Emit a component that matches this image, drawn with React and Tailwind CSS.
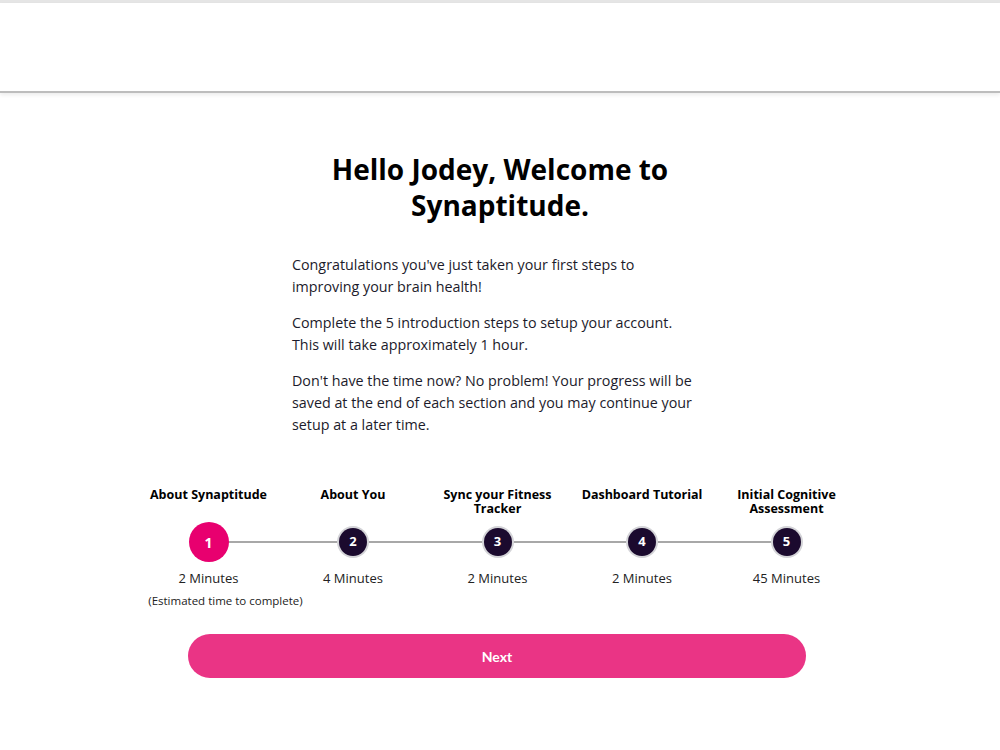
import React from "react";

const steps = [
  { n: 1, title: ["About Synaptitude"], time: "2 Minutes", active: true },
  { n: 2, title: ["About You"], time: "4 Minutes" },
  { n: 3, title: ["Sync your Fitness", "Tracker"], time: "2 Minutes" },
  { n: 4, title: ["Dashboard Tutorial"], time: "2 Minutes" },
  { n: 5, title: ["Initial Cognitive", "Assessment"], time: "45 Minutes" },
];

function Step({ step }) {
  return (
    <div className="flex flex-col items-center w-[144.5px]">
      <div className="h-[30px] text-[12.5px] font-bold leading-[14px] text-black text-center pt-[2px]">
        {step.title.map((t) => (
          <div key={t}>{t}</div>
        ))}
      </div>
      <div className="h-[40px] mt-[6px] flex items-center justify-center relative z-10">
        {step.active ? (
          <div className="w-[40px] h-[40px] rounded-full bg-[#e8006f] text-white font-bold text-[14px] flex items-center justify-center">
            {step.n}
          </div>
        ) : (
          <div className="w-[28px] h-[28px] rounded-full bg-[#1b0a2e] text-white font-bold text-[13px] flex items-center justify-center shadow-[0_0_0_2px_#d4d4d8]">
            {step.n}
          </div>
        )}
      </div>
      <div className="mt-[8px] text-[13px] leading-[16px] text-[#222]">{step.time}</div>
      {step.active && (
        <div className="mt-[8px] self-start ml-[12px] text-[11.5px] leading-[14px] text-[#222] whitespace-nowrap">
          (Estimated time to complete)
        </div>
      )}
    </div>
  );
}

export default function App() {
  return (
    <div className="min-h-[750px] bg-white font-['Open_Sans',sans-serif]">
      <div className="h-[3px] bg-[#e5e5e5]" />
      <header className="h-[90px] bg-white border-b-2 border-[#bdbdbd] shadow-[0_2px_4px_rgba(0,0,0,0.08)]" />

      <main className="flex flex-col items-center pt-[58px]">
        <h1 className="text-[28px] font-bold leading-[36px] text-black text-center w-[380px]">
          Hello Jodey, Welcome to Synaptitude.
        </h1>

        <div className="w-[420px] ml-[4px] mt-[31px] text-[14.3px] leading-[22px] text-[#1c1b2b] space-y-[14px]">
          <p>
            Congratulations you've just taken your first steps to
            <br />
            improving your brain health!
          </p>
          <p>
            Complete the 5 introduction steps to setup your account.
            <br />
            This will take approximately 1 hour.
          </p>
          <p>
            Don't have the time now? No problem! Your progress will be saved at the end of each section and you may continue your setup at a later time.
          </p>
        </div>

        <div className="relative mt-[50px] mr-[5px] flex">
          <div className="absolute left-[72px] right-[72px] top-[55px] h-[2px] bg-[#a8a8a8]" />
          {steps.map((s) => (
            <Step key={s.n} step={s} />
          ))}
        </div>

        <button className="mt-[26px] mr-[6px] w-[618px] h-[44px] rounded-full bg-[#ea3485] text-white font-['Lato',sans-serif] font-bold text-[14px]">
          Next
        </button>
      </main>
    </div>
  );
}
